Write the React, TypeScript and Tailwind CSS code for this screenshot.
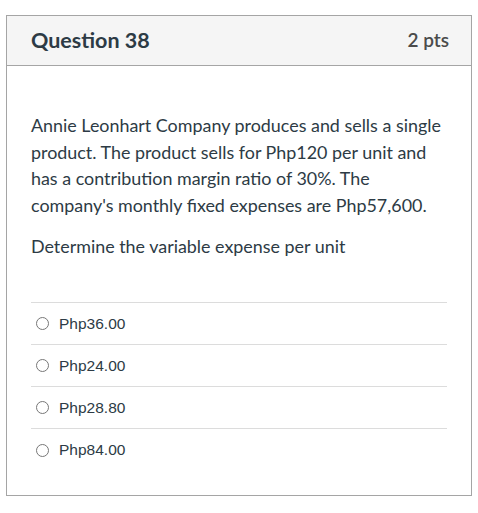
import React from 'react';

const answers = ['Php36.00', 'Php24.00', 'Php28.80', 'Php84.00'];

const App = () => {
  return (
    <div className="min-h-screen bg-white pt-[15px] pl-[6px]" style={{ fontFamily: 'Lato, "Liberation Sans", sans-serif' }}>
      <div className="w-[466px] border border-[#a5a5a5] text-[#2d3b45]">
        {/* Header */}
        <div className="flex h-[50px] items-center justify-between border-b border-[#a5a5a5] bg-[#f5f5f5] pl-[24px] pr-[22px]">
          <h2 className="text-[21.5px] font-bold text-[#2d3b45]">Question 38</h2>
          <span className="text-[19px] font-semibold text-[#4b4b4b]">2 pts</span>
        </div>

        {/* Body */}
        <div className="px-[24px] pt-[46px] pb-[24px]">
          <p className="text-[17.9px] leading-[26.7px]">
            Annie Leonhart Company produces and sells a single product. The product sells for Php120 per unit and has a contribution margin ratio of 30%. The company's monthly fixed expenses are Php57,600.
          </p>
          <p className="mt-[14px] text-[17.9px] leading-[26.7px]">Determine the variable expense per unit</p>

          <div className="mt-[42px]">
            {answers.map((a) => (
              <label key={a} className="flex h-[42.3px] items-center border-t border-[#dcdcdc] pl-[5px]">
                <span className="h-[13px] w-[13px] rounded-full border border-[#777] bg-white" />
                <span className="ml-[10px] text-[15.5px] text-[#2d3b45]" style={{ fontFamily: '"Liberation Sans", Arial, sans-serif' }}>
                  {a}
                </span>
              </label>
            ))}
          </div>
        </div>
      </div>
    </div>
  );
};

export default App;
